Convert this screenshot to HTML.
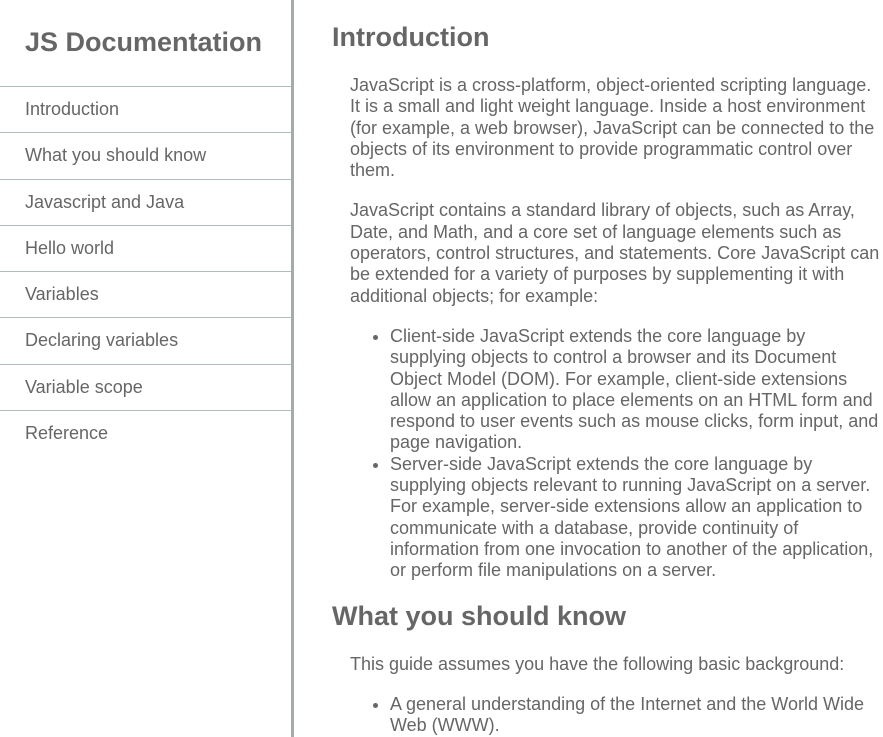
<!DOCTYPE html>
<html><head><meta charset="utf-8"><style>
body{margin:0;font-family:"Liberation Sans",Arial,sans-serif;color:#666;background:#fff;overflow:hidden;width:883px;height:737px}
#nav{position:fixed;left:0;top:0;width:291px;height:737px;border-right:3px solid #a3abab;}
#nav h1{font-size:27px;margin:0;padding:26px 0 0 25px;height:60px;line-height:32px;}
#nav ul{list-style:none;margin:0;padding:0;}
#nav li{border-top:1px solid #b5bcbc;height:45.3px;line-height:44px;padding-left:25px;font-size:18px;}
#main{position:absolute;left:332px;top:0;width:551px;}
h2{font-size:27px;margin:0;line-height:32px;}
p{margin:0 0 0 18px;font-size:18px;line-height:21.3px;white-space:nowrap}
ul.c{margin:0;padding-left:58px;font-size:18px;line-height:21.3px;white-space:nowrap}
</style></head><body>
<div id="nav"><h1>JS Documentation</h1><ul>
<li>Introduction</li><li>What you should know</li><li>Javascript and Java</li><li>Hello world</li><li>Variables</li><li>Declaring variables</li><li>Variable scope</li><li>Reference</li></ul></div>
<div id="main">
<h2 style="padding-top:21px">Introduction</h2>
<p style="margin-top:22px">JavaScript is a cross-platform, object-oriented scripting language.<br>It is a small and light weight language. Inside a host environment<br>(for example, a web browser), JavaScript can be connected to the<br>objects of its environment to provide programmatic control over<br>them.</p>
<p style="margin-top:19px">JavaScript contains a standard library of objects, such as Array,<br>Date, and Math, and a core set of language elements such as<br>operators, control structures, and statements. Core JavaScript can<br>be extended for a variety of purposes by supplementing it with<br>additional objects; for example:</p>
<ul class="c" style="margin-top:19px">
<li>Client-side JavaScript extends the core language by<br>supplying objects to control a browser and its Document<br>Object Model (DOM). For example, client-side extensions<br>allow an application to place elements on an HTML form and<br>respond to user events such as mouse clicks, form input, and<br>page navigation.</li>
<li>Server-side JavaScript extends the core language by<br>supplying objects relevant to running JavaScript on a server.<br>For example, server-side extensions allow an application to<br>communicate with a database, provide continuity of<br>information from one invocation to another of the application,<br>or perform file manipulations on a server.</li>
</ul>
<h2 style="margin-top:18px">What you should know</h2>
<p style="margin-top:22px">This guide assumes you have the following basic background:</p>
<ul class="c" style="margin-top:19px"><li>A general understanding of the Internet and the World Wide<br>Web (WWW).</li></ul>
</div>
</body></html>
